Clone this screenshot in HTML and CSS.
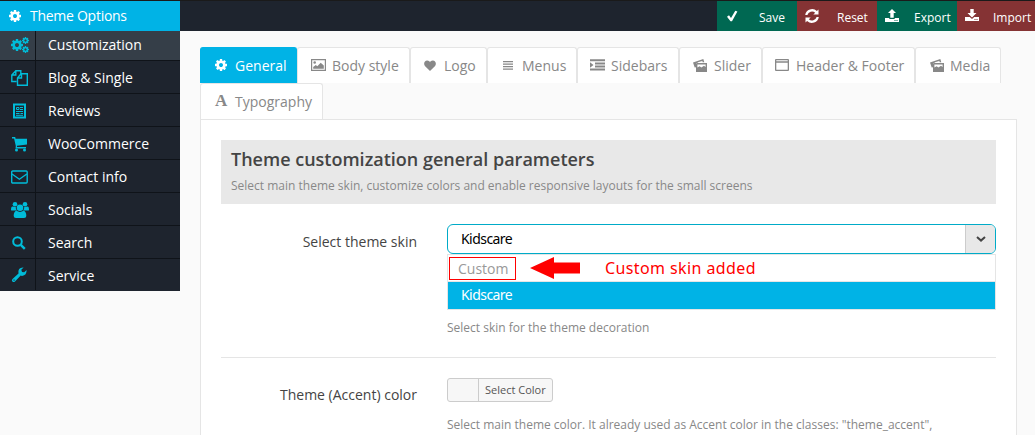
FILE: index.html
```html
<!DOCTYPE html>
<html lang="en">
<head>
<meta charset="utf-8">
<title>Theme Options</title>
<link rel="stylesheet" href="styles.css">
</head>
<body>
<svg class="defs" aria-hidden="true">
  <symbol id="cog" viewBox="128 128 1536 1536"><path d="M1152 896q0-106-75-181t-181-75-181 75-75 181 75 181 181 75 181-75 75-181zm512-109v222q0 12-8 23t-20 13l-185 28q-19 54-39 91 35 50 107 138 10 12 10 25t-9 23q-27 37-99 108t-94 71q-12 0-26-9l-138-108q-44 23-91 38-16 136-29 186-7 28-36 28h-222q-14 0-24.500-8.500t-11.500-21.500l-28-184q-49-16-90-37l-141 107q-10 9-25 9-14 0-25-11-126-114-165-168-7-10-7-23 0-12 8-23 15-21 51-66.500t54-70.500q-27-50-41-99l-183-27q-13-2-21-12.500t-8-23.500v-222q0-12 8-23t19-13l186-28q14-46 39-92-40-57-107-138-10-12-10-24 0-10 9-23 26-36 98.500-107.500t94.500-71.500q13 0 26 10l138 107q44-23 91-38 16-136 29-186 7-28 36-28h222q14 0 24.500 8.500t11.500 21.500l28 184q49 16 90 37l142-107q9-9 24-9 13 0 25 10 129 119 165 170 7 8 7 22 0 12-8 23-15 21-51 66.500t-54 70.500q26 50 41 98l183 28q13 2 21 12.500t8 23.500z"/></symbol>
  <symbol id="photos" viewBox="0 0 14 14"><path fill-rule="evenodd" d="M0 4.400 10.300 1 11.300 4.200H9.700L9.300 2.900 5 4.300 4 5.300H3V9L1.700 9.600zM3 5H14V14H3zM4.400 6.500V9.600L6.600 8.300 8.400 9.500 11 7.700 12.600 8.900V6.500z"/></symbol>
</svg>

<header class="topbar">
  <h1 class="brand"><svg class="ico cog"><use href="#cog"/></svg>Theme Options</h1>
  <nav class="actions">
    <a class="action green save"><svg class="ico" viewBox="0 0 14 14"><path d="M0 7.800 2 6.300 4 9 8.300 1.700 10.400 2.500 5 12.300H3.500z"/></svg><span>Save</span></a>
    <a class="action red reset"><svg class="ico" viewBox="0 0 14 14"><path d="M.2 6A7 7 0 0 1 11.900 2L13.500.5V5.600H8.300L10.200 3.700A4.800 4.800 0 0 0 2.400 6zM13.800 8A7 7 0 0 1 2.100 12L.5 13.500V8.400H5.700L3.800 10.300A4.800 4.800 0 0 0 11.600 8z"/></svg><span>Reset</span></a>
    <a class="action green export"><svg class="ico" viewBox="0 0 14 14"><path d="M7 0 11 4H8.700V8.800H5.300V4H3z"/><path fill-rule="evenodd" d="M0 9H4.300V10H9.700V9H14V13H0zM9.500 11h1v1h-1zM11.500 11h1v1h-1z"/></svg><span>Export</span></a>
    <a class="action red import"><svg class="ico" viewBox="0 0 14 14"><path d="M5.300 0H8.700V4H11.500L7 8.500 2.500 4H5.300z"/><path fill-rule="evenodd" d="M0 8H4.800L7 10 9.200 8H14V12H0zM9.500 10h1v1h-1zM11.500 10h1v1h-1z"/></svg><span>Import</span></a>
  </nav>
</header>

<div class="layout">
  <ul class="menu">
    <li class="item active"><span class="cell"><svg class="ico" viewBox="0 0 18 16"><use href="#cog" y="2" width="12" height="12"/><use href="#cog" x="11" y="0" width="7" height="7"/><use href="#cog" x="11" y="9" width="7" height="7"/></svg></span><span class="name">Customization</span></li>
    <li class="item"><span class="cell"><svg class="ico line" viewBox="0 0 18 16"><path d="M5.500 11.500H.8V5L4.800.8H9.800V4M.8 5H4.800V.8M10 3.800H16.300V15.200H6.500V8zM6.500 8H10.500V3.800"/></svg></span><span class="name">Blog &amp; Single</span></li>
    <li class="item"><span class="cell"><svg class="ico line" viewBox="0 0 18 16"><path stroke-width="2" d="M3 1.500H14V14.500H3z"/><path stroke-width="1" d="M5.500 4.500H8V6.500H5.500zM9 4.500H12M9 6.500H12M5 8.500H12M5 10.500H8.500M9.500 10.500H12M5 12.300H12"/></svg></span><span class="name">Reviews</span></li>
    <li class="item"><span class="cell"><svg class="ico" viewBox="0 0 18 16"><path d="M1 1H4.200L4.600 2.700H16V8.500L6 9.700V11H15V12.500H4.500L4.800 10 3.100 2.500H1z"/><circle cx="5.500" cy="14" r="1.500"/><circle cx="13.500" cy="14" r="1.500"/></svg></span><span class="name">WooCommerce</span></li>
    <li class="item"><span class="cell"><svg class="ico line" viewBox="0 0 18 16"><rect x=".7" y="2" width="15.500" height="12" rx="1"/><path d="M1 5 8.400 10.200 15.800 5"/></svg></span><span class="name">Contact info</span></li>
    <li class="item"><span class="cell"><svg class="ico" viewBox="0 0 18 16"><circle cx="4" cy="2.300" r="2.300"/><circle cx="14" cy="2.300" r="2.300"/><path d="M0 8Q0 4.600 1.500 4.600L4.800 5Q4.500 7 6 8.500H1.500Q0 8.500 0 8zM18 8Q18 4.600 16.500 4.600L13.200 5Q13.500 7 12 8.500H16.500Q18 8.500 18 8z"/><circle cx="9" cy="5.800" r="3.300"/><path d="M5.500 8.800Q9 11 12.500 8.800 15.400 9.500 15.300 14 15.300 16 13 16H5Q2.700 16 2.700 14 2.600 9.500 5.500 8.800z"/></svg></span><span class="name">Socials</span></li>
    <li class="item"><span class="cell"><svg class="ico line" viewBox="0 0 18 16"><circle cx="6.500" cy="6.500" r="4.300" stroke-width="2"/><path stroke-width="2.400" d="m9.800 9.800 4 4"/></svg></span><span class="name">Search</span></li>
    <li class="item"><span class="cell"><svg class="ico" viewBox="0 0 18 16"><path fill-rule="evenodd" d="M12.600.4 10.300 2.800 11 5 13.200 5.300 15.600 3.100Q15.800 8.600 11 8.900L9.700 8.600 4 14.500Q2.600 15.700 1.400 14.500.3 13.300 1.500 12L7.500 6.600Q6.500 0 12.600.4zM3 12.500a.6.6 0 1 0 .1 0z"/></svg></span><span class="name">Service</span></li>
  </ul>

  <main class="content">
    <div class="tabs">
      <a class="tab current t-general"><svg class="ico cog"><use href="#cog"/></svg>General</a>
      <a class="tab t-body"><svg class="ico" viewBox="0 0 15 12"><path fill-rule="evenodd" d="M0 0H15V12H0zM1.200 1.200V10.800H13.800V1.200z"/><path d="M2.200 9.800V8L4.800 6 6.300 7.200 9.700 3.800 12.800 6.500V9.800z"/><circle cx="3.700" cy="3.500" r="1.300"/></svg>Body style</a>
      <a class="tab t-logo"><svg class="ico" viewBox="0 0 12 11"><path d="M6 11 .9 5.900C-.8 3.700.5.500 3.200.500 4.700.5 5.600 1.300 6 2.200 6.400 1.300 7.300.500 8.800.500 11.500.5 12.800 3.700 11.100 5.900z"/></svg>Logo</a>
      <a class="tab t-menus"><svg class="ico" viewBox="0 0 10 10"><path d="M0 1H10V2.300H0zM0 3.500H10V4.800H0zM0 6H10V7.300H0zM0 8.500H10V9.800H0z"/></svg>Menus</a>
      <a class="tab t-side"><svg class="ico" viewBox="0 0 15 12"><path d="M0 .3H15V2.300H0zM5 3.400H15V5.400H5zM5 6.500H15V8.500H5zM0 9.600H15V11.600H0zM0 3.300 3.500 6 0 8.800z"/></svg>Sidebars</a>
      <a class="tab t-slider"><svg class="ico"><use href="#photos"/></svg>Slider</a>
      <a class="tab t-header"><svg class="ico" viewBox="0 0 14 12"><path fill-rule="evenodd" d="M1 0H13Q14 0 14 1V11Q14 12 13 12H1Q0 12 0 11V1Q0 0 1 0zM1.300 1.200V2.200H12.700V1.200zM1.300 3.700V10.800H12.700V3.700z"/></svg>Header &amp; Footer</a>
      <a class="tab t-media"><svg class="ico"><use href="#photos"/></svg>Media</a>
      <a class="tab t-typo"><span class="letter">A</span>Typography</a>
    </div>

    <section class="panel">
      <div class="intro">
        <h2>Theme customization general parameters</h2>
        <p>Select main theme skin, customize colors and enable responsive layouts for the small screens</p>
      </div>
      <div class="field skin">
        <label>Select theme skin</label>
        <div class="control">
          <div class="select"><span>Kidscare</span><i class="caret"><svg viewBox="0 0 10 6"><path d="M1 1 5 4.600 9 1"/></svg></i></div>
          <ul class="options">
            <li class="option"><span class="marked">Custom</span><svg class="arrow" viewBox="0 0 50 22"><path d="M0 11 24 0V5.500H50V16.500H24V22z"/></svg><span class="note">Custom skin added</span></li>
            <li class="option chosen">Kidscare</li>
          </ul>
          <p class="help">Select skin for the theme decoration</p>
        </div>
      </div>
      <div class="field accent">
        <label>Theme (Accent) color</label>
        <div class="control">
          <button class="picker"><span>Select Color</span></button>
          <p class="help">Select main theme color. It already used as Accent color in the classes: "theme_accent",</p>
        </div>
      </div>
    </section>
  </main>
</div>
</body>
</html>
```

FILE: styles.css
```css
* { box-sizing: border-box; }
body, h1, h2, p, ul { margin: 0; padding: 0; }
body {
  height: 435px;
  overflow: hidden;
  background: #fafafa;
  font-family: "Open Sans", "Noto Sans", sans-serif;
  font-size: 14px;
  color: #444;
}
ul { list-style: none; }
.defs { position: absolute; width: 0; height: 0; }
.ico { display: block; flex: none; fill: currentColor; }
.ico.line { fill: none; stroke: currentColor; stroke-width: 1.4; }

.topbar {
  display: flex;
  justify-content: space-between;
  height: 31px;
  border-top: 1px solid #1a1a1a;
  background: #1e242e;
}
.brand {
  display: flex;
  align-items: center;
  gap: 9px;
  width: 180px;
  padding: 0 0 1px 9px;
  background: #00b3e6;
  color: #fff;
  font-size: 14px;
  font-weight: 400;
  letter-spacing: -0.27px;
}
.ico.cog { width: 12px; height: 12px; }
.actions { display: flex; width: 318px; }
.action {
  display: flex;
  align-items: center;
  width: 80px;
  padding-left: 8px;
  color: #fff;
  font-size: 12px;
}
.action .ico { width: 14px; height: 14px; margin-right: 18px; }
.action span { padding-top: 2px; white-space: nowrap; }
.green { background: #006852; }
.red { background: #853334; }
.save { padding-left: 10px; }
.action.export .ico { margin-right: 15px; }
.save .ico { margin-right: 18px; }
.import { width: 78px; }
.action.import .ico { margin-right: 14px; }

.layout { display: flex; align-items: flex-start; }
.menu { width: 180px; color: #fff; }
.item {
  display: flex;
  height: 33px;
  border-bottom: 1px solid #0f1319;
  background: #1e242e;
}
.item.active { height: 30px; background: #353e48; }
.item:last-child { height: 32px; border-bottom-color: #1e242e; }
.cell {
  display: flex;
  align-items: center;
  width: 36px;
  padding: 1px 0 0 11px;
  border-right: 1px solid #0f1319;
  color: #00bcd9;
}
.cell .ico { width: 18px; height: 16px; overflow: visible; }
.name { padding-left: 12px; line-height: 34px; }
.active .name { line-height: 28px; }
.active .ico { margin-top: -3px; }

.content { width: 817px; margin: 16px 0 0 20px; }
.tabs { display: flex; flex-wrap: wrap; }
.tab {
  display: flex;
  align-items: center;
  height: 36px;
  padding-bottom: 1px;
  border: 1px solid #e5e5e5;
  border-bottom: 0;
  border-radius: 3px 3px 0 0;
  background: #fff;
  color: #888;
  white-space: nowrap;
}
.tab.current { border-color: #00b3e6; background: #00b3e6; color: #fff; }
.t-general { width: 97px; padding-left: 14px; gap: 8px; }
.t-body { width: 113px; padding-left: 13px; gap: 6px; }
.t-body .ico { width: 15px; height: 12px; }
.t-logo { width: 77px; padding-left: 13px; gap: 8px; }
.t-logo .ico { width: 12px; height: 11px; }
.t-menus { width: 90px; padding-left: 15px; gap: 9px; }
.t-menus .ico { width: 10px; height: 10px; }
.t-side { width: 102px; padding-left: 12px; gap: 6px; }
.t-side .ico { width: 15px; height: 12px; }
.t-slider { width: 83px; padding-left: 13px; gap: 7px; }
.t-slider .ico, .t-media .ico { width: 14px; height: 14px; }
.t-header { width: 153px; padding-left: 12px; gap: 7px; }
.t-header .ico { width: 14px; height: 12px; }
.t-media { width: 86px; padding-left: 14px; gap: 6px; }
.t-typo { width: 123px; padding-left: 14px; gap: 7px; }
.letter { width: 13px; font: bold 17px "Liberation Serif", serif; }

.panel {
  height: 316px;
  padding: 20px 20px 0;
  border: 1px solid #e5e5e5;
  border-bottom: 0;
  background: #fff;
}
.intro { height: 64px; padding: 6px 10px 0; background: #e8e8e8; }
.intro h2 { font-size: 18px; font-weight: 600; line-height: 26px; }
.intro p { margin-top: 4px; color: #888; font-size: 12px; line-height: 20px; }
.field { display: flex; gap: 30px; }
.field label { width: 196px; text-align: right; line-height: 20px; }
.control { width: 549px; }
.skin { height: 154px; padding-top: 20px; border-bottom: 1px solid #e5e5e5; }
.skin label { padding-top: 8px; }
.select {
  display: flex;
  justify-content: space-between;
  align-items: center;
  height: 30px;
  padding-left: 13px;
  border: 1px solid #00abc8;
  border-radius: 6px;
  overflow: hidden;
  color: #000;
  font-family: "Noto Sans", sans-serif;
  letter-spacing: -0.55px;
}
.select span { padding-bottom: 2px; }
.caret {
  display: flex;
  align-items: center;
  justify-content: center;
  width: 30px;
  height: 28px;
  border-left: 1px solid #ccc;
  background: #e8e8e8;
}
.caret svg { width: 10px; height: 6px; fill: none; stroke: #444; stroke-width: 2; }
.options { border: 1px solid #e5e5e5; }
.option { display: flex; align-items: center; height: 27px; border-bottom: 1px solid #e5e5e5; }
.option.chosen {
  padding: 0 0 2px 13px;
  border-bottom: 0;
  background: #00b3e6;
  color: #fff;
  font-family: "Noto Sans", sans-serif;
  letter-spacing: -0.55px;
}
.marked {
  width: 67px;
  height: 23px;
  margin-left: 1px;
  padding-left: 8px;
  border: 1px solid #f00;
  color: #999;
  line-height: 22px;
}
.arrow { width: 50px; height: 22px; margin-left: 14px; fill: #f00; }
.note { margin-left: 25px; color: #f00; font: 16px "Noto Sans", sans-serif; letter-spacing: 0.4px; }
.help { color: #888; font-size: 12px; line-height: 18px; white-space: nowrap; }
.skin .help { margin-top: 9px; }
.accent { padding-top: 20px; }
.accent label { padding-top: 7px; }
.picker {
  display: flex;
  width: 106px;
  height: 24px;
  padding: 0 0 0 30px;
  border: 1px solid #ccc;
  border-radius: 3px;
  background: #f7f7f7;
  color: #555;
  font: 11px/22px "Open Sans", sans-serif;
}
.picker span { padding-left: 6px; border-left: 1px solid #ccc; white-space: nowrap; }
.accent .help { height: 18px; margin-top: 14px; overflow: hidden; }
```
